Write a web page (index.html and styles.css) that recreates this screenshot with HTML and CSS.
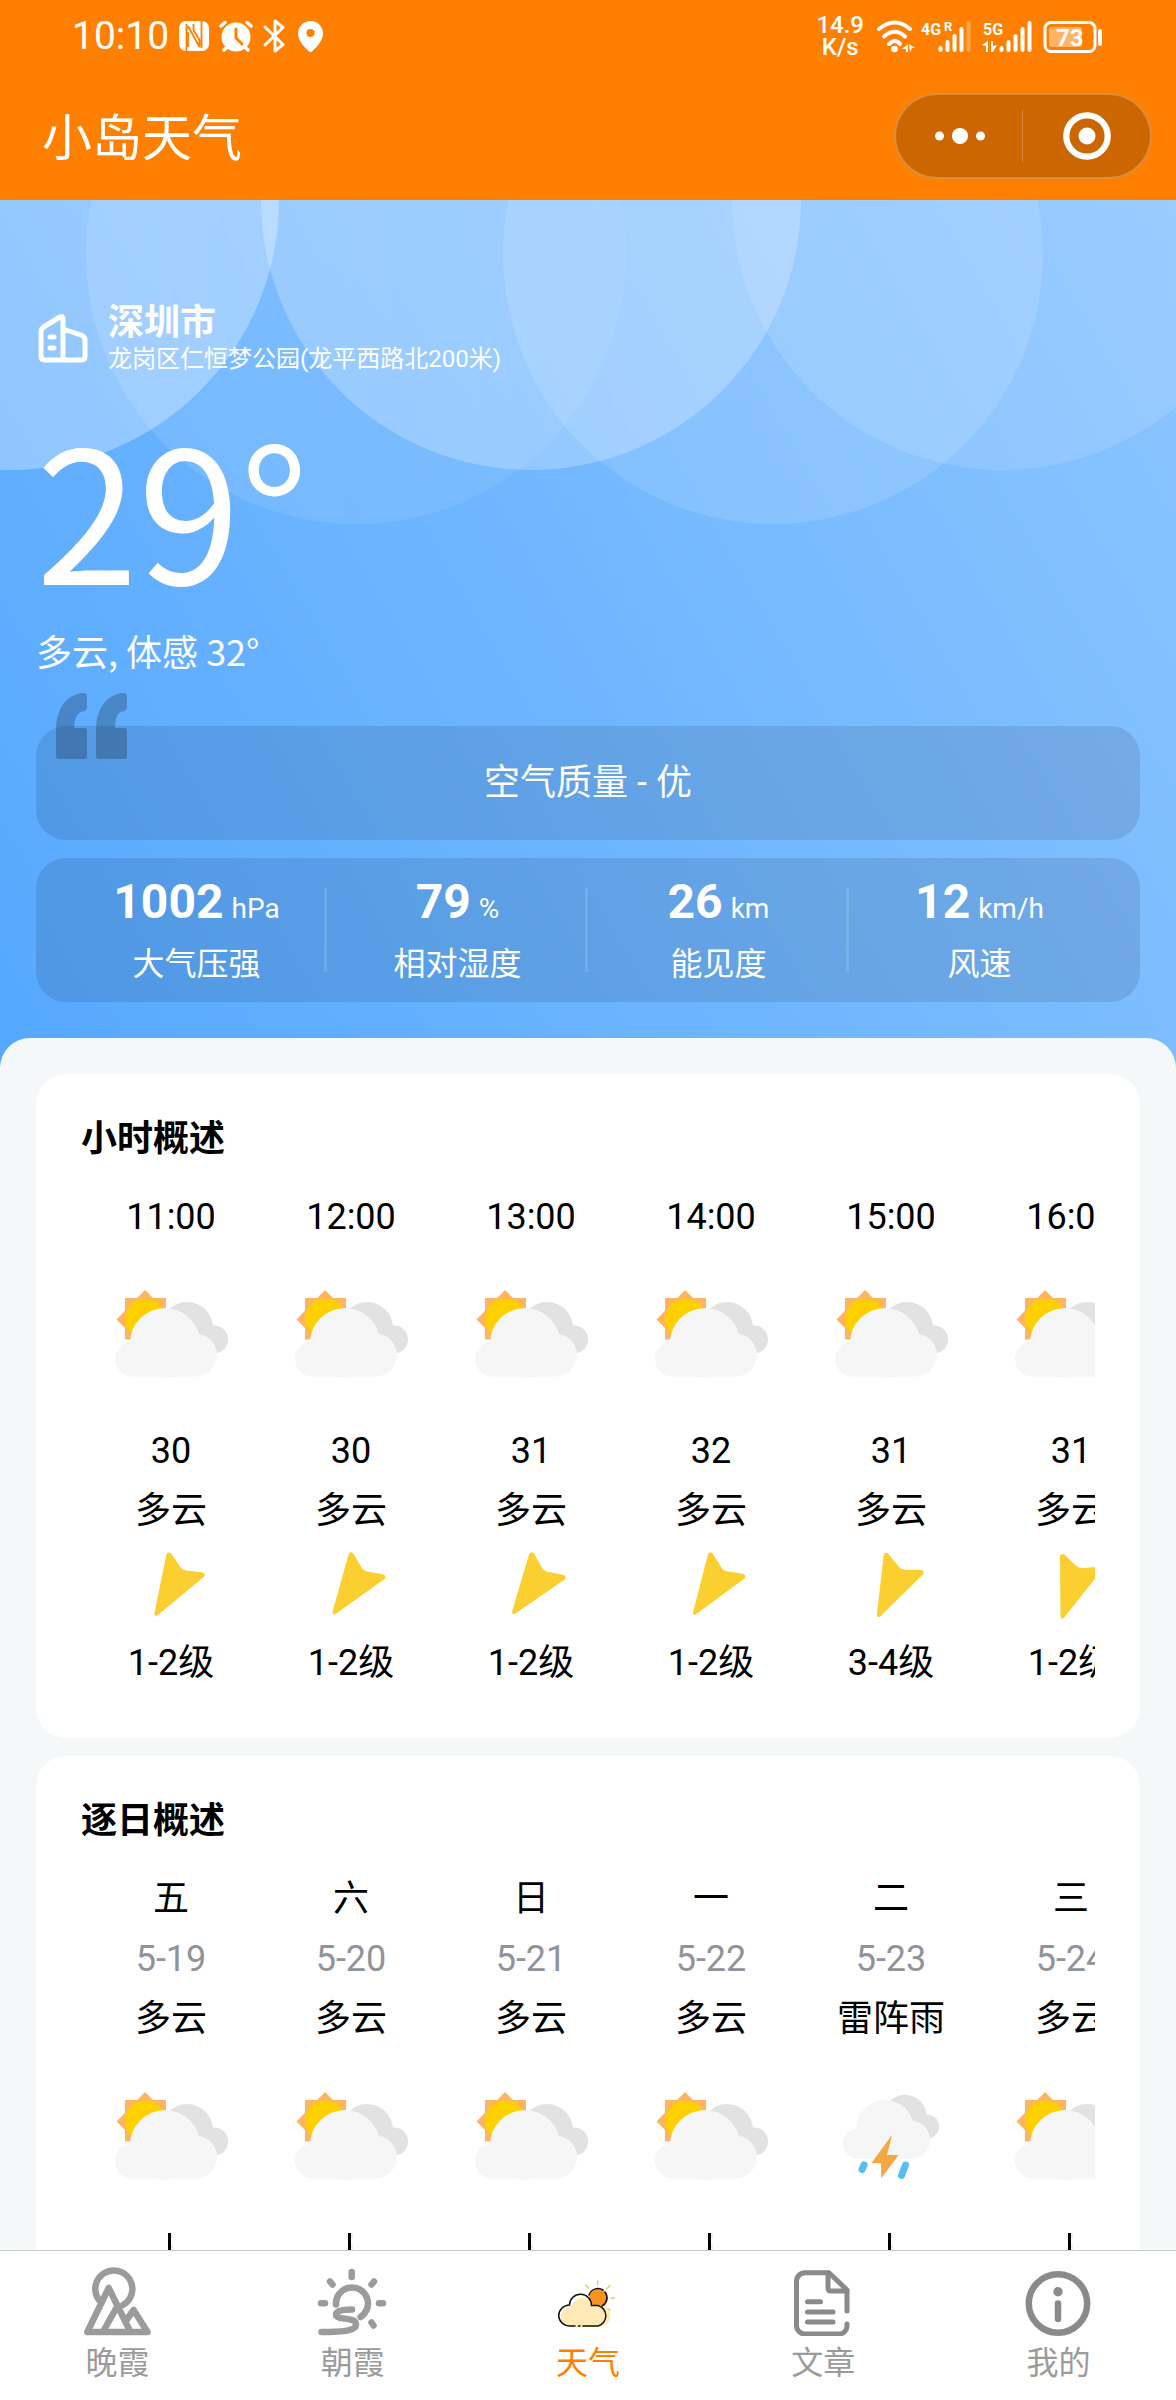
FILE: index.html
```
<!DOCTYPE html>
<html lang="zh-CN">
<head>
    <meta charset="UTF-8">
    <meta name="viewport" content="width=device-width, initial-scale=1.0">
    <title>小岛天气</title>
    <link rel="stylesheet" href="styles.css">
</head>
<body>
    <!-- 图标定义 -->
    <svg class="sprite" aria-hidden="true">
        <symbol id="cloudy" viewBox="0 0 180 174">
            <g fill="#ffb55f">
                <rect x="44" y="51" width="41" height="41.5"/>
                <path d="M64 43L93 72L64 101L35.500 72.500z"/>
            </g>
            <circle cx="64.500" cy="72" r="20.500" fill="#ffd000"/>
            <g fill="#e2e2e2">
                <circle cx="106" cy="81" r="26"/>
                <circle cx="133" cy="92.500" r="14"/>
            </g>
            <g fill="#f6f6f6">
                <circle cx="51.500" cy="112" r="17.500"/>
                <circle cx="84" cy="96" r="35"/>
                <circle cx="114.500" cy="108" r="21.500"/>
                <rect x="51" y="96" width="64" height="33.500"/>
            </g>
        </symbol>
        <symbol id="thunder" viewBox="0 0 180 174">
            <g fill="#e2e2e2">
                <circle cx="104" cy="67.500" r="21.700"/>
                <circle cx="126" cy="77.500" r="12"/>
            </g>
            <g fill="#f6f6f6">
                <circle cx="57" cy="94.700" r="15"/>
                <circle cx="84" cy="80" r="29"/>
                <circle cx="110" cy="90.700" r="19"/>
                <rect x="57" y="82" width="53" height="27.700"/>
            </g>
            <path fill="#f5a742" d="M91 86L86 106H97.500L80.300 129.300L80 114.300H70.300z"/>
            <g stroke="#56bef0" stroke-width="7" stroke-linecap="round">
                <path d="M63 116L61 120.500"/>
                <path d="M104.500 116L100.500 126.500"/>
            </g>
        </symbol>
        <symbol id="arrow" viewBox="-92 -45 180 94">
            <path fill="#fbcf30" stroke="#fbcf30" stroke-width="4" stroke-linejoin="round" d="M0 34L-20.500 -24Q-20 -25 -19 -24.500L-4 -17.500Q0 -16 4 -17.500L19 -24.500Q20 -25 20.500 -24z"/>
        </symbol>
        <symbol id="chart" viewBox="0 0 180 120">
            <path d="M90 10V120" stroke="#eee" stroke-width="4" stroke-dasharray="5 7"/>
            <rect x="87" y="10" width="3" height="110"/>
        </symbol>
    </svg>

    <div class="app">
        <header class="header">
            <div class="status-bar">
                <span class="clock">10:10</span>
                <svg class="status-left" width="146" height="36" viewBox="0 0 146 36" fill="#fff" aria-hidden="true">
                    <rect x="1" y="3" width="30" height="30" rx="7"/>
                    <path d="M8.500 33V6M10 8L21.500 29V22L15.500 12V6M10 14V29M23.500 3V30" fill="none" stroke="#ff8000" stroke-width="1.800"/>
                    <circle cx="58" cy="19" r="14.500"/>
                    <path d="M43 8L47 4.500M69 4.500L73 8M49 29L46 32M67 29L70 32" stroke="#fff" stroke-width="3.500" stroke-linecap="round"/>
                    <path d="M58 11V20L64 26" fill="none" stroke="#ff8000" stroke-width="3" stroke-linecap="round"/>
                    <path d="M87 9L105 26.500L97 33V3L105 9.500L87 27" fill="none" stroke="#fff" stroke-width="3" stroke-linecap="round" stroke-linejoin="round"/>
                    <path fill-rule="evenodd" d="M132.500 3C139.500 3 145 8.500 145 15.500C145 22 140 28 134.500 33Q132.500 35 130.500 33C125 28 120 22 120 15.500C120 8.500 125.500 3 132.500 3zM132.500 11A4 4 0 1 0 132.500 19A4 4 0 1 0 132.500 11z"/>
                </svg>
                <span class="speed">14.9<br>K/s</span>
                <svg class="signals" width="230" height="36" viewBox="0 0 230 36" fill="#fff" aria-hidden="true">
                    <g fill="none" stroke="#fff" stroke-width="4" stroke-linecap="round">
                        <path d="M3 11Q19 -2 34 11"/>
                        <path d="M8 18.500Q19 9 29 18.500"/>
                        <path d="M13 26Q19 20 24 26"/>
                    </g>
                    <circle cx="18.500" cy="31" r="3.300"/>
                    <path d="M26 31L32 26V34H30V31zM33 26L39 30H36L34 34z"/>
                    <text x="45" y="17" class="net-label">4G</text>
                    <text x="68" y="13" class="net-small">R</text>
                    <g stroke="#fff" stroke-width="4" stroke-linecap="round">
                        <path d="M64.500 30V32M71.500 24V32M78.500 18V32M85.500 11V32"/>
                        <path d="M92.500 5V32" opacity=".3"/>
                        <path d="M125.500 30V32M132.500 24V32M139.500 18V32M146.500 11V32M153.500 5V32"/>
                    </g>
                    <text x="107" y="17" class="net-label">5G</text>
                    <path d="M106 27L112 23V34H110V28zM115 23H117V28L121 27L117 34H115z"/>
                    <rect x="169" y="4.500" width="50" height="29" rx="6" fill="none" stroke="#fff" stroke-width="3"/>
                    <rect x="173" y="9" width="33" height="20" rx="3" opacity=".4"/>
                    <rect x="222" y="11" width="4" height="17" rx="2"/>
                    <text x="180" y="28" class="battery-label">73</text>
                </svg>
            </div>
            <div class="nav-bar">
                <h1 class="nav-title">小岛天气</h1>
                <div class="capsule">
                    <button class="capsule-btn" aria-label="更多">
                        <svg width="54" height="20" viewBox="0 0 54 20" fill="#fff">
                            <circle cx="6.500" cy="10" r="4.500"/>
                            <circle cx="27" cy="10" r="8"/>
                            <circle cx="47.500" cy="10" r="4.500"/>
                        </svg>
                    </button>
                    <button class="capsule-btn" aria-label="关闭">
                        <svg width="48" height="48" viewBox="0 0 48 48" fill="#fff">
                            <circle cx="24" cy="24" r="20.700" fill="none" stroke="#fff" stroke-width="6.300"/>
                            <circle cx="24" cy="24" r="8.500"/>
                        </svg>
                    </button>
                </div>
            </div>
        </header>

        <main class="content">
            <section class="hero">
                <svg class="bubbles" viewBox="0 0 1176 330" fill="#fff" aria-hidden="true">
                    <linearGradient id="fade">
                        <stop offset="0" stop-color="#fff" stop-opacity=".12"/>
                        <stop offset="1" stop-color="#fff" stop-opacity=".05"/>
                    </linearGradient>
                    <circle cx="9" cy="0" r="270" opacity=".3"/>
                    <circle cx="531" cy="0" r="270" opacity=".24"/>
                    <circle cx="1002" cy="0" r="270" opacity=".12"/>
                    <circle cx="356" cy="54" r="270" fill="url(#fade)"/>
                    <circle cx="773" cy="54" r="270" opacity=".12"/>
                </svg>

                <div class="location">
                    <svg width="56" height="56" viewBox="0 0 56 56" fill="none" stroke="#fff" stroke-width="5" stroke-linejoin="round" stroke-linecap="round" aria-hidden="true">
                        <path d="M27 51H9Q5 51 5 47V23Q5 20 7.500 18L24 8Q27 6.500 27 10zM27 20L45 26Q49 27.500 49 31V47Q49 51 45 51H27"/>
                        <path d="M14 28H18M14 39H18"/>
                    </svg>
                    <div>
                        <div class="city">深圳市</div>
                        <div class="address">龙岗区仁恒梦公园(龙平西路北200米)</div>
                    </div>
                </div>

                <div class="temp">29°</div>
                <div class="condition">多云, 体感 32°</div>

                <div class="panel air">
                    <svg class="quote" width="72" height="66" viewBox="0 0 72 66" aria-hidden="true">
                        <path d="M0 63V38C0 16 10 1 28 0Q31 0 31 3V14Q31 17 28 18C21 19 18 26 18 35H28Q31 35 31 38V63Q31 66 28 66H3Q0 66 0 63z"/>
                        <path d="M40 63V38C40 16 50 1 68 0Q71 0 71 3V14Q71 17 68 18C61 19 59 26 59 35H68Q71 35 71 38V63Q71 66 68 66H43Q40 66 40 63z"/>
                    </svg>
                    空气质量 - 优
                </div>

                <div class="panel stats">
                    <div class="stat">
                        <div class="stat-value">1002<small>hPa</small></div>
                        <div class="stat-label">大气压强</div>
                    </div>
                    <div class="stat">
                        <div class="stat-value">79<small>%</small></div>
                        <div class="stat-label">相对湿度</div>
                    </div>
                    <div class="stat">
                        <div class="stat-value">26<small>km</small></div>
                        <div class="stat-label">能见度</div>
                    </div>
                    <div class="stat">
                        <div class="stat-value">12<small>km/h</small></div>
                        <div class="stat-label">风速</div>
                    </div>
                </div>
            </section>

            <div class="sheet">
                <!-- 小时概述 -->
                <section class="card">
                    <h2 class="card-title">小时概述</h2>
                    <div class="scroller">
                        <div class="column">
                            <div class="row">11:00</div>
                            <svg class="weather-icon"><use href="#cloudy"/></svg>
                            <div class="row">30</div>
                            <div class="row">多云</div>
                            <svg class="wind-icon"><use href="#arrow" transform="rotate(31 92 45)"/></svg>
                            <div class="row">1-2级</div>
                        </div>
                        <div class="column">
                            <div class="row">12:00</div>
                            <svg class="weather-icon"><use href="#cloudy"/></svg>
                            <div class="row">30</div>
                            <div class="row">多云</div>
                            <svg class="wind-icon"><use href="#arrow" transform="rotate(35 92 45)"/></svg>
                            <div class="row">1-2级</div>
                        </div>
                        <div class="column">
                            <div class="row">13:00</div>
                            <svg class="weather-icon"><use href="#cloudy"/></svg>
                            <div class="row">31</div>
                            <div class="row">多云</div>
                            <svg class="wind-icon"><use href="#arrow" transform="rotate(36 92 45)"/></svg>
                            <div class="row">1-2级</div>
                        </div>
                        <div class="column">
                            <div class="row">14:00</div>
                            <svg class="weather-icon"><use href="#cloudy"/></svg>
                            <div class="row">32</div>
                            <div class="row">多云</div>
                            <svg class="wind-icon"><use href="#arrow" transform="rotate(34 92 45)"/></svg>
                            <div class="row">1-2级</div>
                        </div>
                        <div class="column">
                            <div class="row">15:00</div>
                            <svg class="weather-icon"><use href="#cloudy"/></svg>
                            <div class="row">31</div>
                            <div class="row">多云</div>
                            <svg class="wind-icon"><use href="#arrow" transform="rotate(26 92 45)"/></svg>
                            <div class="row">3-4级</div>
                        </div>
                        <div class="column">
                            <div class="row">16:00</div>
                            <svg class="weather-icon"><use href="#cloudy"/></svg>
                            <div class="row">31</div>
                            <div class="row">多云</div>
                            <svg class="wind-icon"><use href="#arrow" transform="rotate(19 92 45)"/></svg>
                            <div class="row">1-2级</div>
                        </div>
                    </div>
                </section>

                <!-- 逐日概述 -->
                <section class="card">
                    <h2 class="card-title">逐日概述</h2>
                    <div class="scroller">
                        <div class="column">
                            <div class="row">五</div>
                            <div class="row date">5-19</div>
                            <div class="row">多云</div>
                            <svg class="weather-icon"><use href="#cloudy"/></svg>
                            <svg class="temp-chart"><use href="#chart"/></svg>
                        </div>
                        <div class="column">
                            <div class="row">六</div>
                            <div class="row date">5-20</div>
                            <div class="row">多云</div>
                            <svg class="weather-icon"><use href="#cloudy"/></svg>
                            <svg class="temp-chart"><use href="#chart"/></svg>
                        </div>
                        <div class="column">
                            <div class="row">日</div>
                            <div class="row date">5-21</div>
                            <div class="row">多云</div>
                            <svg class="weather-icon"><use href="#cloudy"/></svg>
                            <svg class="temp-chart"><use href="#chart"/></svg>
                        </div>
                        <div class="column">
                            <div class="row">一</div>
                            <div class="row date">5-22</div>
                            <div class="row">多云</div>
                            <svg class="weather-icon"><use href="#cloudy"/></svg>
                            <svg class="temp-chart"><use href="#chart"/></svg>
                        </div>
                        <div class="column">
                            <div class="row">二</div>
                            <div class="row date">5-23</div>
                            <div class="row">雷阵雨</div>
                            <svg class="weather-icon"><use href="#thunder"/></svg>
                            <svg class="temp-chart"><use href="#chart"/></svg>
                        </div>
                        <div class="column">
                            <div class="row">三</div>
                            <div class="row date">5-24</div>
                            <div class="row">多云</div>
                            <svg class="weather-icon"><use href="#cloudy"/></svg>
                            <svg class="temp-chart"><use href="#chart"/></svg>
                        </div>
                    </div>
                </section>
            </div>
        </main>

        <nav class="tab-bar">
            <a class="tab" href="#sunset">
                <svg viewBox="0 0 72 72" fill="none" stroke="#9b9b9b" stroke-width="6.500" stroke-linecap="round" stroke-linejoin="round">
                    <path d="M17 36A18.500 18.500 0 1 1 41 41"/>
                    <path d="M47.500 66L26.700 24L5.300 68H65.500L51.600 46L44.500 56M34.300 44L22 66"/>
                </svg>
                <span>晚霞</span>
            </a>
            <a class="tab" href="#sunrise">
                <svg viewBox="0 0 72 72" fill="none" stroke="#9b9b9b" stroke-width="6.500" stroke-linecap="round" stroke-linejoin="round">
                    <path d="M34.700 8V13M13 17.500L15.500 20.500M57 17.500L54.500 20.500M4 39.300H8M62 39.300H66M54.500 58.500L56.500 61.500"/>
                    <path d="M19 40.500A16 16 0 1 1 43.500 53"/>
                    <path d="M35 45.500C25 45.500 19 47 19 50.500C19 57 39 52 39 60.500C39 66 30 68 4.500 68"/>
                </svg>
                <span>朝霞</span>
            </a>
            <a class="tab active" href="#weather">
                <svg viewBox="0 0 72 72" fill="none" stroke-width="1.500" stroke-linecap="round">
                    <path d="M45.600 17V20.500M33.500 21L36.500 24M57.800 21.500L55 24.500M59 34H62.500M56.500 45L58 46.500" stroke="#f3c36b"/>
                    <circle cx="46.500" cy="34.500" r="9.500" fill="#f7931e"/>
                    <path d="M20 63A11 10.500 0 0 1 20 42A11 11 0 0 1 41 41H48A10 10.500 0 0 1 48 63z" fill="#ffe9b5"/>
                    <path d="M37 31A9.500 9.500 0 0 1 51 26M53 28A9.500 9.500 0 0 1 50 42" stroke="#111"/>
                    <path d="M34 62H46A10 10.500 0 0 0 46 41.500H39.500A11 11 0 0 0 17.500 41A11 10.500 0 0 0 18 62H23M26.500 62H28M31 62H34" stroke="#111"/>
                </svg>
                <span>天气</span>
            </a>
            <a class="tab" href="#articles">
                <svg viewBox="0 0 72 72" fill="none" stroke="#8a8a8a" stroke-width="5" stroke-linecap="round" stroke-linejoin="round">
                    <path d="M60 47V26L42 8.700H18A8.500 8.500 0 0 0 9.500 17V61.500A8.500 8.500 0 0 0 18 70H52A8 8 0 0 0 60 62V60"/>
                    <path d="M41 9V24Q41 27 44 27H60M20.500 37.700H33.500M20.500 48H46M20.500 58H46"/>
                </svg>
                <span>文章</span>
            </a>
            <a class="tab" href="#mine">
                <svg viewBox="0 0 72 72" fill="none" stroke="#8a8a8a" stroke-width="6.500" stroke-linecap="round">
                    <circle cx="36" cy="39.500" r="29.200"/>
                    <circle cx="36" cy="27.700" r="4.700" fill="#8a8a8a" stroke="none"/>
                    <path d="M36 39.500V55"/>
                </svg>
                <span>我的</span>
            </a>
        </nav>
    </div>
</body>
</html>
```
FILE: styles.css
```
* {
    margin: 0;
    padding: 0;
    box-sizing: border-box;
}

body {
    font-family: Roboto, "Noto Sans CJK SC", sans-serif;
    font-size: 36px;
    color: #000;
    background: #f4f8f9;
}

svg {
    display: block;
}

.sprite {
    position: absolute;
    width: 0;
    height: 0;
}

.app {
    display: flex;
    flex-direction: column;
    height: 100vh;
}

/* 顶部 */
.header {
    background: #ff8000;
    color: #fff;
}

.status-bar {
    display: flex;
    align-items: center;
    height: 72px;
    padding: 0 70px 0 72px;
}

.clock {
    font-size: 39px;
}

.status-left {
    margin-left: 9px;
    margin-right: auto;
}

.speed {
    font-size: 24px;
    font-weight: 500;
    line-height: 22px;
    text-align: center;
    margin-right: 12px;
}

.net-label {
    font-size: 16px;
    font-weight: bold;
}

.net-small {
    font-size: 13px;
    font-weight: bold;
}

.battery-label {
    font-size: 24px;
    font-weight: bold;
}

.nav-bar {
    display: flex;
    align-items: center;
    justify-content: space-between;
    height: 128px;
    padding: 0 24px 0 42px;
}

.nav-title {
    padding-bottom: 4px;
    font-size: 50px;
    font-weight: normal;
}

.capsule {
    display: flex;
    height: 86px;
    background: rgba(0, 0, 0, 0.2);
    border: 2px solid rgba(255, 255, 255, 0.25);
    border-radius: 43px;
}

.capsule-btn {
    display: flex;
    align-items: center;
    justify-content: center;
    width: 127px;
    border: none;
    background: linear-gradient(rgba(255, 255, 255, 0.25), rgba(255, 255, 255, 0.25)) right center / 1px 52px no-repeat;
    cursor: pointer;
}

.capsule-btn:last-child {
    background: none;
}

/* 实时天气 */
.content {
    flex: 1;
    min-height: 0;
    overflow-y: auto;
    scrollbar-width: none;
}

.hero {
    position: relative;
    padding: 101px 36px 66px;
    color: #fff;
    background: linear-gradient(60deg, #55a8ff, #8cc5ff);
}

.bubbles {
    position: absolute;
    top: 0;
    left: 0;
    width: 100%;
}

.location {
    position: relative;
    display: flex;
    align-items: center;
    gap: 16px;
}

.city {
    font-weight: bold;
    line-height: 44px;
}

.address {
    font-size: 24px;
    line-height: 28px;
}

.temp {
    position: relative;
    margin-top: 32px;
    font-family: "Noto Sans CJK SC", sans-serif;
    font-size: 184px;
    line-height: 200px;
}

.condition {
    margin-top: 23px;
    font-family: "Noto Sans CJK SC", sans-serif;
    line-height: 44px;
}

.panel {
    position: relative;
    background: rgba(0, 0, 0, 0.1);
    border-radius: 30px;
}

.air {
    margin-top: 54px;
    line-height: 114px;
    text-align: center;
}

.quote {
    position: absolute;
    top: -33px;
    left: 20px;
    opacity: 0.22;
}

.stats {
    display: grid;
    grid-template-columns: repeat(4, 1fr);
    margin-top: 18px;
    padding: 0 30px;
}

.stat {
    padding: 16px 0 18px;
    text-align: center;
    background: linear-gradient(rgba(255, 255, 255, 0.12), rgba(255, 255, 255, 0.12)) right center / 3px 84px no-repeat;
}

.stat:last-child {
    background: none;
}

.stat-value {
    display: flex;
    align-items: baseline;
    justify-content: center;
    gap: 8px;
    font-size: 48px;
    font-weight: bold;
    line-height: 56px;
}

.stat-value small {
    font-size: 28px;
    font-weight: normal;
    line-height: 32px;
}

.stat-label {
    margin-top: 14px;
    font-size: 32px;
    line-height: 40px;
}

/* 预报卡片 */
.sheet {
    position: relative;
    display: flex;
    flex-direction: column;
    gap: 18px;
    margin-top: -30px;
    padding: 36px;
    background: #f4f8f9;
    border-radius: 30px 30px 0 0;
}

.card {
    padding: 45px;
    background: #fff;
    border-radius: 30px;
}

.card-title {
    margin-bottom: 28px;
    font-size: 36px;
    line-height: 40px;
}

.scroller {
    display: flex;
    overflow-x: auto;
    scrollbar-width: none;
}

.column {
    flex: none;
    width: 180px;
    text-align: center;
}

.row {
    height: 60px;
    line-height: 60px;
}

.date {
    color: #909399;
}

.weather-icon {
    width: 180px;
    height: 174px;
}

.wind-icon {
    width: 180px;
    height: 92px;
}

.temp-chart {
    width: 180px;
    height: 120px;
}

/* 底部导航 */
.tab-bar {
    display: grid;
    grid-template-columns: repeat(5, 1fr);
    background: #fff;
    border-top: 1px solid #ccc;
}

.tab {
    display: flex;
    flex-direction: column;
    align-items: center;
    gap: 9px;
    padding: 13px 0 19px;
    font-size: 32px;
    line-height: 36px;
    color: #9b9b9b;
    text-decoration: none;
}

.tab svg {
    width: 72px;
    height: 72px;
}

.tab.active {
    color: #ff8000;
}
```
